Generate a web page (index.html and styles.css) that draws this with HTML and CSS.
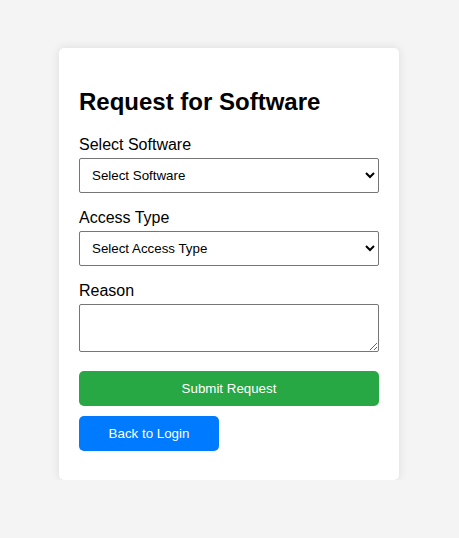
FILE: index.html
```html
<!DOCTYPE html>
<html lang="en">
<head>
<meta charset="utf-8">
<title>Request for Software</title>
<link rel="stylesheet" href="styles.css">
</head>
<body>
<div class="card">
  <h2 class="title">Request for Software</h2>
  <form class="form">
    <label class="label" for="software">Select Software</label>
    <select class="field select" id="software">
      <option>Select Software</option>
    </select>
    <label class="label" for="access">Access Type</label>
    <select class="field select" id="access">
      <option>Select Access Type</option>
    </select>
    <label class="label" for="reason">Reason</label>
    <textarea class="field textarea" id="reason"></textarea>
    <button type="button" class="btn btn-submit">Submit Request</button>
    <button type="button" class="btn btn-back">Back to Login</button>
  </form>
</div>
</body>
</html>
```
FILE: styles.css
```css
html, body {
  margin: 0;
  padding: 0;
}
body {
  background: #f4f4f4;
  font-family: "Liberation Sans", Arial, sans-serif;
  color: #000;
  padding-right: 1px;
}
.card {
  box-sizing: border-box;
  width: 340px;
  margin: 48px auto 0;
  background: #fff;
  border-radius: 5px;
  box-shadow: 0 0 10px rgba(0, 0, 0, 0.1);
  padding: 20px 20px 29px;
}
.title {
  font-size: 24px;
  font-weight: bold;
  margin: 20px 0;
  line-height: 28px;
}
.form {
  margin: 0;
}
.label {
  display: block;
  font-size: 16px;
  line-height: 18px;
  margin-bottom: 4px;
}
.field {
  display: block;
  box-sizing: border-box;
  width: 300px;
  font-family: "Liberation Sans", Arial, sans-serif;
  font-size: 13.33px;
  border: 1px solid #767676;
  border-radius: 2px;
  background: #fff;
  color: #000;
}
.select {
  height: 35px;
  padding: 0 4px 0 8px;
  margin-bottom: 16px;
}
.textarea {
  height: 48px;
  margin-bottom: 19px;
  resize: vertical;
}
.btn {
  display: block;
  box-sizing: border-box;
  height: 35px;
  border: none;
  border-radius: 5px;
  color: #fff;
  font-family: "Liberation Sans", Arial, sans-serif;
  font-size: 13.33px;
  cursor: pointer;
}
.btn-submit {
  width: 300px;
  background: #28a745;
  margin-bottom: 10px;
}
.btn-back {
  width: 140px;
  background: #007bff;
}
```
